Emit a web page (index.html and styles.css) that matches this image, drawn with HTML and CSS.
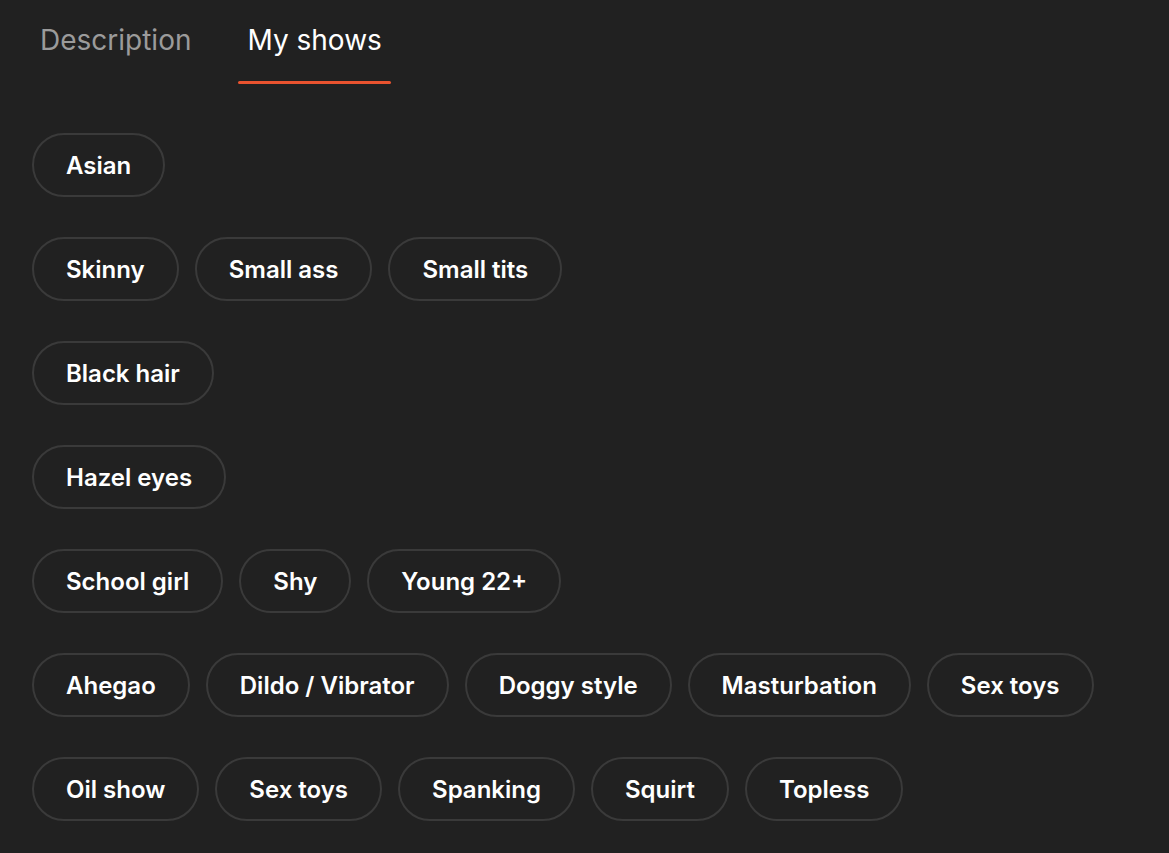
FILE: index.html
```html
<!DOCTYPE html>
<html lang="en">
<head>
  <meta charset="UTF-8">
  <meta name="viewport" content="width=device-width, initial-scale=1.0">
  <title>My shows</title>
  <link rel="stylesheet" href="styles.css">
</head>
<body>
  <div class="profile">
    <!-- tabs -->
    <div class="tabs">
      <a href="javascript:;" class="tab">Description</a>
      <a href="javascript:;" class="tab active">My shows</a>
    </div>

    <!-- tag groups, one line per category -->
    <div class="groups">
      <div class="group">
        <span class="tag">Asian</span>
      </div>
      <div class="group">
        <span class="tag">Skinny</span>
        <span class="tag">Small ass</span>
        <span class="tag">Small tits</span>
      </div>
      <div class="group">
        <span class="tag">Black hair</span>
      </div>
      <div class="group">
        <span class="tag">Hazel eyes</span>
      </div>
      <div class="group">
        <span class="tag">School girl</span>
        <span class="tag">Shy</span>
        <span class="tag">Young 22+</span>
      </div>
      <div class="group">
        <span class="tag">Ahegao</span>
        <span class="tag">Dildo / Vibrator</span>
        <span class="tag">Doggy style</span>
        <span class="tag">Masturbation</span>
        <span class="tag">Sex toys</span>
      </div>
      <div class="group">
        <span class="tag">Oil show</span>
        <span class="tag">Sex toys</span>
        <span class="tag">Spanking</span>
        <span class="tag">Squirt</span>
        <span class="tag">Topless</span>
      </div>
    </div>
  </div>
</body>
</html>
```

FILE: styles.css
```css
*{
  padding: 0;
  margin: 0;
  box-sizing: border-box;
}
html,body{
  height: 100%;
  background-color: #212121;
}
body{
  font-family: Inter, "Noto Sans", sans-serif;
  color: #fff;
}
a{
  text-decoration: none;
}
.profile{
  padding: 0 32px;
}
.tabs{
  display: flex;
  gap: 38px;
  margin-left: -1px;
}
.tab{
  position: relative;
  padding: 22px 9px 0;
  height: 85px;
  font-size: 28px;
  line-height: 36px;
  color: #9b9b9b;
}
.tab.active{
  color: #fff;
}
.tab.active::after{
  content: "";
  position: absolute;
  left: 0;
  right: 0;
  bottom: 1px;
  height: 3px;
  border-radius: 2px;
  background-color: #e9532f;
}
.groups{
  display: flex;
  flex-direction: column;
  gap: 40px;
  margin-top: 48px;
}
.group{
  display: flex;
  flex-wrap: wrap;
  gap: 16px;
}
.tag{
  display: inline-flex;
  align-items: center;
  height: 64px;
  padding: 0 32px;
  border: 2px solid #3a3a3a;
  border-radius: 32px;
  font-size: 24px;
  font-weight: 600;
  color: #fff;
}
```
